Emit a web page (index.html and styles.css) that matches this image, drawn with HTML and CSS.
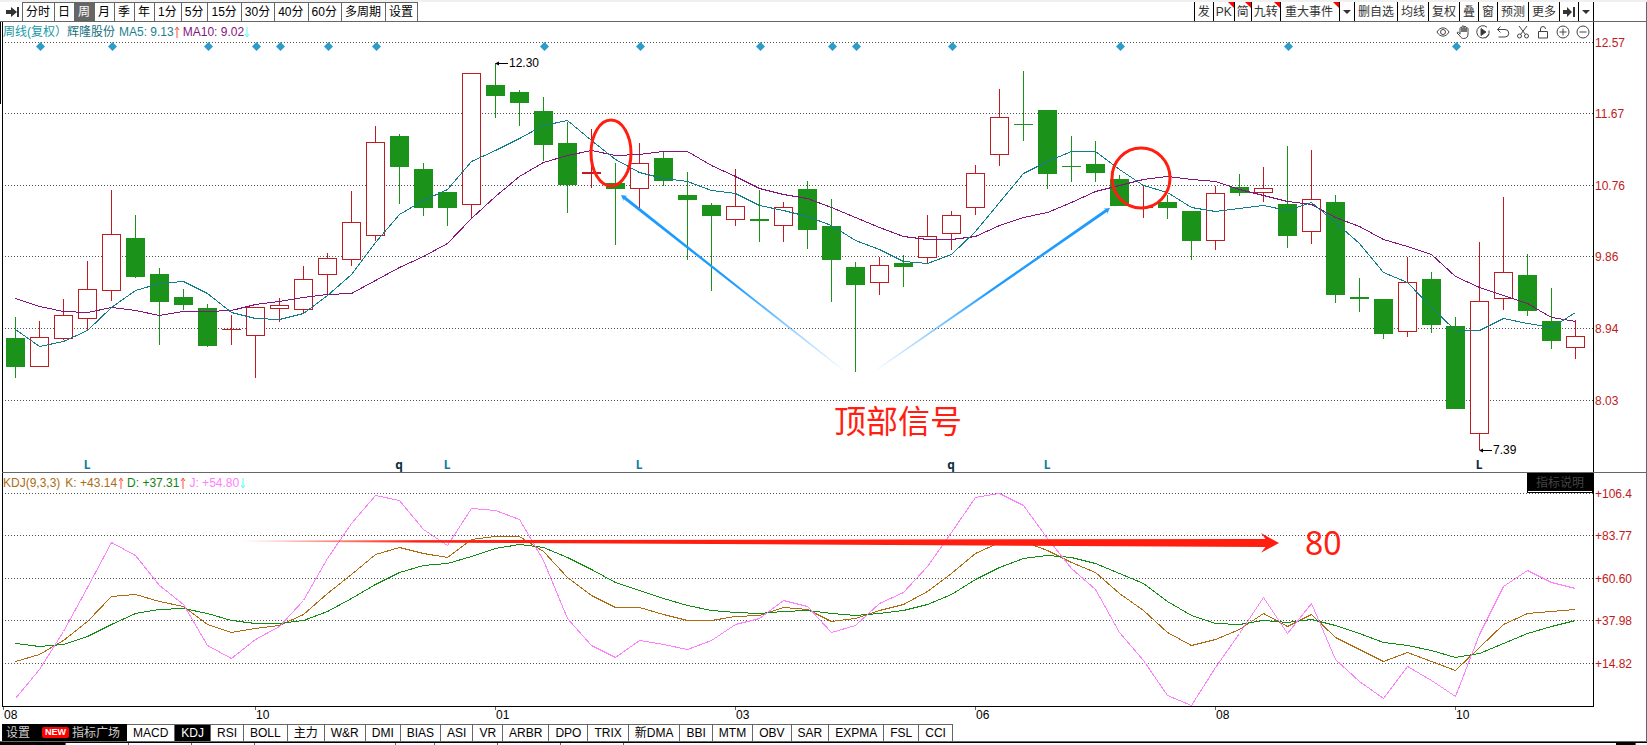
FILE: index.html
```html
<!DOCTYPE html>
<html lang="zh-CN">
<head>
    <meta charset="UTF-8">
    <meta name="viewport" content="width=device-width, initial-scale=1.0">
    <title>辉隆股份 周线</title>
    <link rel="stylesheet" href="styles.css">
</head>
<body>
    <!-- 顶部工具栏 -->
    <header class="toolbar">
        <button class="icon-btn" aria-label="收起左侧">
            <svg width="14" height="12" viewBox="0 0 14 12"><path d="M0 4h5V1l6 5-6 5V8H0zM11 1h2v10h-2z" fill="#333"/></svg>
        </button>
        <nav class="periods">
            <button>分时</button>
            <button>日</button>
            <button class="active">周</button>
            <button>月</button>
            <button>季</button>
            <button>年</button>
            <button>1分</button>
            <button>5分</button>
            <button>15分</button>
            <button>30分</button>
            <button>40分</button>
            <button>60分</button>
            <button>多周期</button>
            <button>设置</button>
        </nav>
        <div class="tools">
            <button>发</button>
            <button class="hot">PK</button>
            <button class="hot">简</button>
            <button class="hot">九转</button>
            <button class="hot wide">重大事件</button>
            <button class="drop" aria-label="事件菜单"><svg width="8" height="4" viewBox="0 0 8 4"><path d="M0 0h8L4 4z" fill="#333"/></svg></button>
            <button>删自选</button>
            <button>均线</button>
            <button>复权</button>
            <button>叠</button>
            <button>窗</button>
            <button>预测</button>
            <button>更多</button>
            <button aria-label="收起右侧"><svg width="12" height="12" viewBox="0 0 12 12"><path d="M0 4h4V1l5 5-5 5V8H0zM10 1h2v10h-2z" fill="#333"/></svg></button>
            <button class="drop" aria-label="更多菜单"><svg width="8" height="4" viewBox="0 0 8 4"><path d="M0 0h8L4 4z" fill="#333"/></svg></button>
        </div>
    </header>

    <main class="charts">
        <!-- K线 -->
        <section class="pane">
            <div class="plot">
                <div class="legend">
                    <span class="period">周线(复权）</span>
                    <span class="stock">辉隆股份</span>
                    <span class="ma5">MA5: 9.13</span>
                    <svg class="up" width="6" height="12" viewBox="0 0 6 12"><path d="M3 12V2M1 4l2-3 2 3"/></svg>
                    <span class="ma10">MA10: 9.02</span>
                    <svg class="down" width="6" height="12" viewBox="0 0 6 12"><path d="M3 1v10M1 8l2 3 2-3"/></svg>
                    <div class="draw-tools">
                        <button aria-label="显示"><svg viewBox="0 0 14 14"><path d="M1 7c3-5.500 9-5.500 12 0-3 5.500-9 5.500-12 0z"/><circle cx="7" cy="7" r="2.500"/></svg></button>
                        <button aria-label="拖动"><svg viewBox="0 0 14 14"><path d="M4 9V3.500a1 1 0 0 1 2 0V7 1.800a1 1 0 0 1 2 0V7 2.300a1 1 0 0 1 2 0V7 3.800a1 1 0 0 1 2 0V9c0 3-1.500 4.500-4.200 4.500-2 0-3-1-4-2.700L1 8c.2-1.200 1.500-1 2-.2l1 1.500"/></svg></button>
                        <button aria-label="回放"><svg viewBox="0 0 14 14"><path d="M11 2.200A6.200 6.200 0 1 0 13 5.500M9 13a6.200 6.200 0 0 0 4-4"/><path d="M5 3.500 10 7l-5 3.500z" fill="#333"/></svg></button>
                        <button aria-label="撤销"><svg viewBox="0 0 14 14"><path d="M4.500 1.500 1.500 4.500l3 3M1.500 4.500H9a3.700 3.700 0 0 1 0 7.500H2.500"/></svg></button>
                        <button aria-label="裁剪"><svg viewBox="0 0 14 14"><path d="m3 1 6.500 8.500M11 1 4.500 9.500"/><circle cx="3.500" cy="11" r="2"/><circle cx="10.500" cy="11" r="2"/></svg></button>
                        <button aria-label="锁定"><svg viewBox="0 0 14 14"><path d="M2.500 6.500h9v6.500h-9zM4.500 6.500V4a2.500 2.500 0 0 1 5 0"/></svg></button>
                        <button aria-label="放大"><svg viewBox="0 0 14 14"><circle cx="7" cy="7" r="6"/><path d="M3.500 7h7M7 3.500v7"/></svg></button>
                        <button aria-label="缩小"><svg viewBox="0 0 14 14"><circle cx="7" cy="7" r="6"/><path d="M3.500 7h7"/></svg></button>
                    </div>
                </div>
                <svg id="kline" class="kline"></svg>
            </div>
            <svg id="priceAxis" class="axis"></svg>
        </section>

        <!-- KDJ 指标 -->
        <section class="pane sub">
            <div class="plot">
                <div class="legend">
                    <span class="k">KDJ(9,3,3)</span>
                    <span class="k">K: +43.14</span>
                    <svg class="up" width="6" height="12" viewBox="0 0 6 12"><path d="M3 12V2M1 4l2-3 2 3"/></svg>
                    <span class="d">D: +37.31</span>
                    <svg class="up" width="6" height="12" viewBox="0 0 6 12"><path d="M3 12V2M1 4l2-3 2 3"/></svg>
                    <span class="j">J: +54.80</span>
                    <svg class="down" width="6" height="12" viewBox="0 0 6 12"><path d="M3 1v10M1 8l2 3 2-3"/></svg>
                    <button class="explain">指标说明</button>
                </div>
                <svg id="kdj" class="kdj"></svg>
            </div>
            <svg id="kdjAxis" class="axis"></svg>
        </section>

        <svg id="months" class="months"></svg>
    </main>

    <!-- 指标切换 -->
    <nav class="indicators">
        <div class="plaza">
            <button>设置</button>
            <button><span class="new">NEW</span>指标广场</button>
        </div>
        <button>MACD</button>
        <button class="active">KDJ</button>
        <button>RSI</button>
        <button>BOLL</button>
        <button>主力</button>
        <button>W&amp;R</button>
        <button>DMI</button>
        <button>BIAS</button>
        <button>ASI</button>
        <button>VR</button>
        <button>ARBR</button>
        <button>DPO</button>
        <button>TRIX</button>
        <button>新DMA</button>
        <button>BBI</button>
        <button>MTM</button>
        <button>OBV</button>
        <button>SAR</button>
        <button>EXPMA</button>
        <button>FSL</button>
        <button>CCI</button>
    </nav>
    <div class="next-row">
        <i class="on"></i><i></i><i></i><i></i><i class="long"></i><i class="short"></i><i></i><i></i><i></i><i class="end"></i>
    </div>

    <script src="chart.js"></script>
</body>
</html>
```

FILE: styles.css
```css
* {
    margin: 0;
    padding: 0;
    box-sizing: border-box;
}

body {
    font-family: "Liberation Sans", "Noto Sans CJK SC", sans-serif;
    font-size: 12px;
    line-height: 16px;
    background-color: #fff;
    color: #000;
    border-top: 2px solid #f0f0f0;
    overflow: hidden;
}

button {
    font: inherit;
    color: inherit;
    background: none;
    border: none;
    white-space: nowrap;
    cursor: pointer;
}

svg {
    display: block;
}

/* 工具栏 */
.toolbar {
    display: flex;
    height: 20px;
    border-bottom: 1px solid #666;
    border-right: 1px solid #666;
}

.icon-btn {
    width: 22px;
    padding-left: 6px;
}

.periods {
    display: flex;
    border-left: 1px solid #666;
    border-top: 1px solid #666;
}

.periods button {
    padding: 0 4px 0 3px;
    border-right: 1px solid #666;
}

.periods .active {
    background-color: #666;
    color: #fff;
}

.tools {
    display: flex;
    margin-left: auto;
    margin-right: 52px;
    border-left: 1px solid #000;
    color: #333;
}

.tools button {
    position: relative;
    padding: 0 3px;
    border-right: 1px solid #000;
}

.tools .hot {
    padding: 0 2px;
}

.tools .wide {
    padding: 0 6px 0 4px;
}

.tools .hot::after {
    content: "";
    position: absolute;
    top: 0;
    right: 0;
    border-top: 6px solid #f00;
    border-left: 6px solid transparent;
}

/* 图表区 */
.charts {
    padding-left: 2px;
    border-right: 1px solid #666;
    background: linear-gradient(#000, #000) no-repeat 0 0 / 1px 82px;
}

.pane {
    display: flex;
}

.sub {
    border-top: 1px solid #666;
}

.plot {
    flex: 1;
    min-width: 0;
    border-left: 1px solid #000;
    border-right: 1px solid #000;
}

.sub .plot {
    border-bottom: 1px solid #000;
}

.kline,
.kdj,
.months {
    width: 100%;
}

.kline {
    height: 430px;
}

.kdj {
    height: 213px;
}

.months {
    height: 17px;
}

.axis {
    width: 52px;
    flex: none;
    fill: #c01a22;
}

.legend {
    display: flex;
    align-items: center;
    height: 20px;
}

.legend span {
    white-space: nowrap;
}

.legend > svg {
    margin-right: 3px;
    fill: none;
}

.sub .legend > svg {
    margin-left: 1px;
}

.period { color: #1899a8; }
.stock { color: #146f80; margin-right: 4px; }
.ma5 { color: #1b7f8f; }
.ma10 { color: #82157e; }
.k { color: #ad6c14; }
.k:first-child { margin-right: 5px; }
.d { color: #148214; }
.j { color: #ff80ff; }
.up { stroke: #ff5040; }
.down { stroke: #5ff; }

.draw-tools {
    display: flex;
    margin-left: auto;
}

.draw-tools button {
    width: 20px;
    padding: 0 3px;
}

.draw-tools svg {
    width: 14px;
    height: 14px;
    fill: none;
    stroke: #444;
}

.explain {
    margin-left: auto;
    align-self: stretch;
    width: 66px;
    background-color: #000;
    color: #444;
    border: 1px solid #000;
    box-shadow: inset 0 -1px #fff;
}

/* 曲线与K线 */
.crisp { shape-rendering: crispEdges; }
.grid { stroke: #555; stroke-dasharray: 1 2; }
.rise { fill: #fff; stroke: #c01a22; }
.rise-line { fill: #c01a22; }
.fall { fill: #1b931b; }
.line { fill: none; }
.line-ma5 { stroke: #147d8c; }
.line-ma10 { stroke: #82157e; }
.line-k { stroke: #ad6c14; }
.line-d { stroke: #148c14; }
.line-j { stroke: #ff80ff; }
.diamond { fill: #2c9dc9; }
.mark { fill: #147d9c; font: bold 12px "Noto Sans", sans-serif; text-anchor: middle; }
.mark-dark { fill: #0c2c44; }
.ring { fill: none; stroke: #ff1e10; stroke-width: 3; }
.note { fill: #ff1e10; font: 32px "Noto Sans", "Noto Sans CJK SC", sans-serif; }

/* 指标栏 */
.indicators {
    display: flex;
    height: 18px;
    padding-left: 2px;
    border-right: 1px solid #666;
    border-bottom: 1px solid #666;
}

.indicators > button {
    padding: 0 6px;
    border-top: 1px solid #666;
    border-right: 1px solid #666;
}

.indicators .active {
    background-color: #000;
    color: #fff;
}

.plaza {
    display: flex;
    gap: 12px;
    width: 125px;
    padding-left: 4px;
    background-color: #000;
    color: #ccc;
}

.plaza button {
    display: flex;
    align-items: center;
    gap: 3px;
}

.new {
    padding: 0 3px;
    border-radius: 2px;
    background-color: #f00;
    color: #fff;
    font-size: 9px;
    font-weight: bold;
    line-height: 11px;
}

.next-row {
    display: flex;
    height: 3px;
    border-top: 1px solid #000;
}

.next-row i {
    width: 63px;
    border-right: 1px solid #666;
}

.next-row .on { width: 66px; background-color: #000; }
.next-row .long { width: 141px; }
.next-row .short { width: 39px; }
.next-row .end { width: 20px; margin-left: auto; margin-right: 11px; background-color: #000; }
```

FILE: chart.js
```js
const NS = 'http://www.w3.org/2000/svg';
const BASE = 1590;

// 涨跌, 最高, 实体上沿, 实体下沿, 最低
const candles = [
    ['g', 317, 338, 367, 378], ['r', 321, 337, 367, 367], ['r', 299, 315, 339, 340], ['r', 261, 289, 319, 330],
    ['r', 190, 234, 291, 301], ['g', 215, 238, 277, 278], ['g', 268, 274, 302, 345], ['g', 289, 297, 305, 310],
    ['g', 304, 308, 346, 347], ['r', 315, 329, 330, 345], ['r', 307, 307, 336, 378], ['r', 298, 305, 309, 322],
    ['r', 266, 279, 310, 314], ['r', 253, 258, 275, 295], ['r', 191, 222, 260, 266], ['r', 126, 142, 236, 241],
    ['g', 134, 136, 167, 204], ['g', 163, 169, 208, 216], ['g', 192, 192, 208, 226], ['r', 73, 73, 205, 219],
    ['g', 63, 85, 96, 118], ['g', 90, 92, 103, 126], ['g', 97, 111, 145, 161], ['g', 122, 143, 185, 213],
    ['r', 129, 172, 174, 188], ['g', 163, 183, 189, 245], ['r', 143, 163, 189, 209], ['g', 152, 158, 181, 186],
    ['g', 172, 195, 200, 260], ['g', 203, 205, 216, 291], ['r', 169, 206, 220, 226], ['g', 190, 219, 221, 242],
    ['r', 202, 207, 226, 242], ['g', 181, 189, 230, 249], ['g', 199, 226, 260, 302], ['g', 262, 267, 285, 372],
    ['r', 257, 265, 283, 295], ['g', 255, 263, 267, 287], ['r', 215, 236, 258, 263], ['r', 211, 215, 234, 250],
    ['r', 165, 173, 208, 215], ['r', 89, 117, 155, 166], ['g', 71, 124, 125, 141], ['g', 110, 110, 174, 189],
    ['g', 136, 166, 167, 182], ['g', 141, 164, 173, 182], ['g', 175, 179, 206, 206], ['r', 186, 207, 208, 218],
    ['g', 195, 202, 208, 219], ['g', 211, 211, 241, 260], ['r', 186, 193, 241, 250], ['g', 174, 187, 193, 196],
    ['r', 167, 188, 193, 202], ['g', 146, 204, 236, 248], ['r', 150, 199, 232, 244], ['g', 195, 202, 295, 303],
    ['g', 278, 297, 299, 312], ['g', 299, 299, 334, 339], ['r', 257, 282, 332, 337], ['g', 272, 279, 325, 333],
    ['g', 317, 326, 409, 409], ['r', 242, 301, 434, 450], ['r', 197, 272, 299, 310], ['g', 254, 275, 311, 316],
    ['g', 288, 321, 341, 349], ['r', 320, 336, 348, 359]
];

const ma5 = [329, 346, 341, 330, 307, 290, 283, 281, 293, 312, 318, 319, 313, 295, 274, 242, 214, 200, 189, 161, 150, 138,
    125, 120, 140, 159, 172, 178, 181, 190, 193, 205, 210, 216, 225, 240, 249, 261, 263, 254, 231, 202, 173, 161, 151, 151,
    169, 185, 192, 207, 211, 208, 205, 210, 202, 222, 243, 272, 282, 307, 330, 330, 318, 323, 327, 312];

const ma10 = [298, 306, 311, 312, 307, 310, 315, 311, 311, 310, 304, 301, 297, 294, 293, 280, 267, 256, 243, 218, 196, 176,
    162, 155, 150, 155, 154, 151, 151, 165, 176, 188, 194, 198, 207, 217, 227, 236, 239, 239, 236, 225, 217, 212, 202, 191,
    185, 179, 176, 179, 181, 189, 195, 201, 204, 217, 226, 239, 246, 254, 276, 287, 295, 303, 317, 321];

const lineK = [661, 654, 640, 621, 596, 594, 601, 606, 624, 632, 628, 625, 614, 593, 574, 554, 547, 553, 557, 539, 536, 536,
    551, 577, 595, 607, 607, 614, 620, 620, 616, 615, 607, 609, 621, 618, 610, 604, 591, 573, 553, 542, 541, 550, 562, 572,
    593, 610, 632, 645, 639, 629, 613, 626, 614, 637, 649, 661, 652, 661, 670, 647, 624, 613, 611, 609];

const lineD = [643, 646, 644, 636, 624, 613, 609, 608, 613, 620, 623, 623, 620, 611, 598, 584, 572, 565, 563, 556, 548, 544,
    547, 557, 569, 582, 590, 598, 605, 610, 612, 613, 611, 610, 613, 615, 613, 610, 604, 594, 579, 567, 558, 555, 557, 563,
    573, 583, 601, 615, 623, 624, 620, 622, 619, 625, 633, 642, 645, 650, 657, 653, 643, 633, 626, 620];

const lineJ = [698, 669, 631, 587, 542, 555, 585, 604, 645, 658, 639, 626, 600, 558, 523, 495, 500, 529, 545, 508, 510, 519,
    560, 618, 645, 657, 640, 644, 649, 640, 624, 618, 600, 606, 632, 625, 603, 592, 566, 532, 497, 493, 505, 538, 568, 589,
    632, 660, 695, 705, 667, 633, 597, 633, 603, 659, 681, 698, 666, 680, 696, 634, 586, 570, 582, 588];

const prices = [[42, '12.57'], [113, '11.67'], [185, '10.76'], [256, '9.86'], [328, '8.94'], [400, '8.03']];
const levels = [[493, '+106.4'], [535, '+83.77'], [578, '+60.60'], [620, '+37.98'], [663, '+14.82']];
const events = [1, 4, 8, 10, 11, 13, 15, 22, 26, 31, 34, 35, 39, 46, 53, 60];
const marks = [[3, 'L'], [16, 'q'], [18, 'L'], [26, 'L'], [39, 'q'], [43, 'L'], [61, 'L', true]];
const months = [[0, '08'], [252, '10'], [492, '01'], [732, '03'], [972, '06'], [1212, '08'], [1452, '10']];

let scale = 1;
const sx = x => Math.round(x * scale);
const cx = i => sx(12 + 24 * i);

function add(parent, tag, attrs, text) {
    const node = document.createElementNS(NS, tag);
    for (const key in attrs) node.setAttribute(key, attrs[key]);
    if (text) node.textContent = text;
    parent.appendChild(node);
    return node;
}

function reset(id, top) {
    const svg = document.getElementById(id);
    svg.innerHTML = '';
    svg.setAttribute('viewBox', `0 ${top} ${svg.clientWidth} ${svg.clientHeight}`);
    return svg;
}

function drawGrid(svg, rows) {
    rows.forEach(([y]) => add(svg, 'line', { class: 'grid crisp', x1: 2, x2: svg.clientWidth, y1: y + 0.5, y2: y + 0.5 }));
}

function drawLine(svg, values, name) {
    const points = values.map((y, i) => `${cx(i) + 0.5},${y + 0.5}`).join(' ');
    add(svg, 'polyline', { class: 'line crisp ' + name, points });
}

function drawCandle(svg, [type, high, top, bottom, low], i) {
    const x = cx(i);
    const flat = bottom - top < 3;
    const fill = type === 'g' ? 'fall' : 'rise-line';
    add(svg, 'rect', { class: fill, x, y: high, width: 1, height: low - high });
    if (type === 'g' || flat) {
        add(svg, 'rect', { class: fill, x: x - 9, y: top, width: 19, height: bottom - top });
    } else {
        add(svg, 'rect', { class: 'rise', x: x - 8.5, y: top + 0.5, width: 18, height: bottom - top - 1 });
    }
}

// 由细到粗、由浅到深的箭头
function drawArrow(svg, id, x1, y1, x2, y2, color, w, head, fade) {
    x1 = sx(x1);
    x2 = sx(x2);
    const len = Math.hypot(x2 - x1, y2 - y1);
    const ux = (x2 - x1) / len, uy = (y2 - y1) / len;
    const at = (d, off) => `${x1 + ux * d - uy * off},${y1 + uy * d + ux * off}`;
    const grad = add(svg, 'linearGradient', { id, gradientUnits: 'userSpaceOnUse', x1, y1, x2, y2 });
    add(grad, 'stop', { offset: 0, 'stop-color': color, 'stop-opacity': 0 });
    add(grad, 'stop', { offset: fade, 'stop-color': color });
    add(svg, 'polygon', {
        fill: `url(#${id})`,
        points: [at(0, -0.6), at(len - head * 0.75, -w / 2), at(len - head, -head * 0.55), at(len, 0),
            at(len - head, head * 0.55), at(len - head * 0.75, w / 2), at(0, 0.6)].join(' ')
    });
}

function drawTip(svg, i, y, text) {
    const x = cx(i);
    add(svg, 'path', { d: `M${x} ${y + 0.5}l4-2v4zM${x + 3} ${y}h10v1h-10z` });
    add(svg, 'text', { x: x + 14, y: y + 4 }, text);
}

function drawKline() {
    const svg = reset('kline', 42);
    drawGrid(svg, prices);
    candles.forEach((c, i) => drawCandle(svg, c, i));
    drawLine(svg, ma10, 'line-ma10');
    drawLine(svg, ma5, 'line-ma5');
    events.forEach(i => add(svg, 'path', { class: 'diamond', d: `M${cx(i) + 1.5} 42l4.500 4.500-4.500 4.500-4.500-4.500z` }));
    marks.forEach(([i, text, dark]) => {
        add(svg, 'text', { class: dark || text === 'q' ? 'mark mark-dark' : 'mark', x: cx(i), y: 469 }, text);
    });
    drawTip(svg, 20, 63, '12.30');
    drawTip(svg, 61, 450, '7.39');

    add(svg, 'ellipse', { class: 'ring', cx: sx(608), cy: 153, rx: 20, ry: 33 });
    add(svg, 'ellipse', { class: 'ring', cx: sx(1138), cy: 178, rx: 29, ry: 30 });
    drawArrow(svg, 'blueLeft', 844, 373, 618, 195, '#1e9bff', 3, 6, 0.5);
    drawArrow(svg, 'blueRight', 869, 373, 1107, 208, '#1e9bff', 3, 6, 0.5);
    add(svg, 'text', { class: 'note', x: sx(831), y: 433 }, '顶部信号');
}

function drawKdj() {
    const svg = reset('kdj', 493);
    drawGrid(svg, levels);
    drawLine(svg, lineK, 'line-k');
    drawLine(svg, lineD, 'line-d');
    drawLine(svg, lineJ, 'line-j');
    drawArrow(svg, 'redLine', 237, 541, 1276, 543, '#ff1e10', 8, 18, 0.17);
    add(svg, 'text', { class: 'note', x: sx(1302), y: 555 }, '80');
}

function drawAxes() {
    const price = reset('priceAxis', 22);
    prices.forEach(([y, text]) => add(price, 'text', { x: 1, y: y + 5 }, text));
    const kdj = reset('kdjAxis', 473);
    levels.forEach(([y, text]) => add(kdj, 'text', { x: 1, y: y + 5 }, text));

    const svg = reset('months', 707);
    months.forEach(([x, text]) => {
        add(svg, 'rect', { x: sx(x) + 1, y: 707, width: 1, height: 3, fill: '#666' });
        add(svg, 'text', { x: sx(x) + 2, y: 719 }, text);
    });
}

function draw() {
    scale = document.getElementById('kline').clientWidth / BASE;
    drawKline();
    drawKdj();
    drawAxes();
}

draw();
window.addEventListener('resize', draw);
```
